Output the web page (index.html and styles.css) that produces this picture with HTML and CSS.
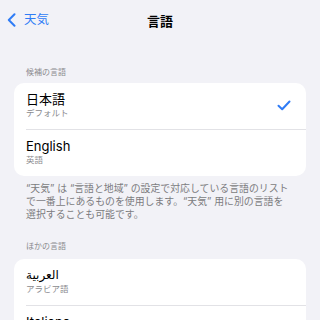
FILE: index.html
```html
<!DOCTYPE html>
<html lang="ja">
<head>
<meta charset="utf-8">
<link rel="stylesheet" href="styles.css">
</head>
<body>
<header class="nav">
  <div class="back">
    <svg class="chev" width="9" height="14" viewBox="0 0 9 14"><path d="M7.5 1.2 L1.8 7 L7.5 12.8" fill="none" stroke="#2f7cf6" stroke-width="2" stroke-linecap="round" stroke-linejoin="round"/></svg>
    <span>天気</span>
  </div>
  <div class="title">言語</div>
  <div></div>
</header>
<main class="content">
  <div class="sec-head">候補の言語</div>
  <section class="card">
    <div class="row">
      <div class="texts">
        <div class="name">日本語</div>
        <div class="sub">デフォルト</div>
      </div>
      <svg class="check" width="14" height="11" viewBox="0 0 14 11"><path d="M1.5 5.8 L5.2 9.3 L12.5 1.5" fill="none" stroke="#2f7cf6" stroke-width="2" stroke-linecap="round" stroke-linejoin="round"/></svg>
    </div>
    <div class="row">
      <div class="texts">
        <div class="name">English</div>
        <div class="sub">英語</div>
      </div>
    </div>
  </section>
  <p class="note">“天気” は “言語と地域” の設定で対応している言語のリスト<br>で一番上にあるものを使用します。“天気” 用に別の言語を<br>選択することも可能です。</p>
  <div class="sec-head sec-head2">ほかの言語</div>
  <section class="card">
    <div class="row">
      <div class="texts">
        <div class="name arabic">العربية</div>
        <div class="sub">アラビア語</div>
      </div>
    </div>
    <div class="row">
      <div class="texts">
        <div class="name">Italiano</div>
        <div class="sub">イタリア語</div>
      </div>
    </div>
  </section>
</main>
</body>
</html>
```
FILE: styles.css
```css
html, body {
  margin: 0;
  padding: 0;
  background: #f2f2f7;
  height: 100%;
  overflow: hidden;
}
body {
  font-family: "Inter", "Noto Sans CJK JP", sans-serif;
  color: #000;
}
.nav {
  height: 40px;
  display: grid;
  grid-template-columns: 1fr auto 1fr;
  align-items: center;
  padding: 0 7px;
}
.back {
  display: flex;
  align-items: center;
  gap: 8px;
  color: #2f7cf6;
  font-size: 12.5px;
}
.back span {
  line-height: 16px;
}
.title {
  font-size: 13px;
  font-weight: 700;
}
.content {
  padding: 0 14px;
}
.sec-head {
  padding: 26px 12px 5px;
  font-size: 8px;
  line-height: 12px;
  color: #8a8a8e;
}
.sec-head2 {
  padding-top: 19px;
  padding-bottom: 7px;
}
.card {
  background: #fff;
  border-radius: 10px;
  padding-left: 12px;
}
.row {
  display: flex;
  align-items: center;
  justify-content: space-between;
  padding: 8px 15px 9px 0;
  height: 29px;
}
.row + .row {
  border-top: 1px solid #e2e2e6;
}
.name {
  font-size: 13px;
  line-height: 16px;
}
.arabic {
  font-family: "DejaVu Sans", "Noto Sans", sans-serif;
  font-size: 12px;
}
.sub {
  font-size: 8.5px;
  line-height: 13px;
  color: #8a8a8e;
}
.check {
  display: block;
}
.note {
  margin: 6px 0 0;
  padding: 0 12px;
  font-size: 9.9px;
  line-height: 13px;
  color: #7c7c80;
  white-space: nowrap;
}
```
